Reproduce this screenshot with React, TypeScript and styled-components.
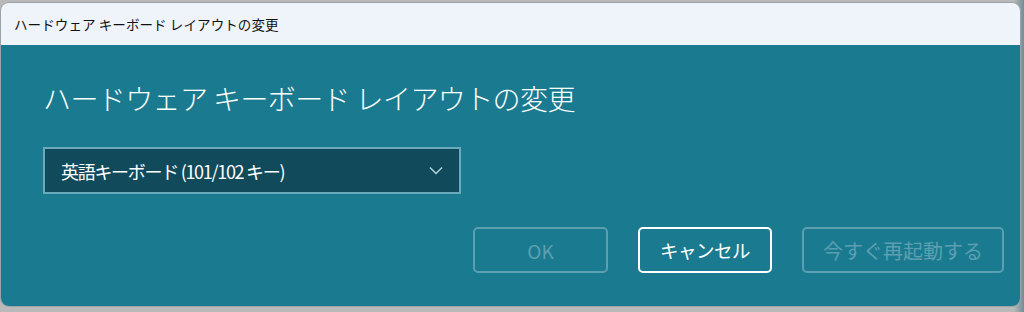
import React from "react";
import styled, { createGlobalStyle } from "styled-components";

const Global = createGlobalStyle`
  html, body { margin: 0; padding: 0; background: #b4b4b4; }
  body { width: 1024px; height: 312px; overflow: hidden; }
  #root { height: 312px; }
`;

const Desktop = styled.div`
  height: 312px;
  box-sizing: border-box;
  padding: 3px 4px 6px 1px;
  display: flex;
  background: linear-gradient(90deg, #b9b9b9 0%, #b9b9b9 99%, #6f8f96 100%);
`;

const Window = styled.div`
  flex: 1;
  display: flex;
  flex-direction: column;
  border-radius: 8px;
  overflow: hidden;
  box-shadow: 0 0 0 1px #9aa4a8;
  font-family: "Noto Sans CJK JP", "Noto Sans", sans-serif;
`;

const TitleBar = styled.div`
  height: 42px;
  background: #eef4f9;
  display: flex;
  align-items: center;
  padding-left: 13px;
  font-size: 13.5px;
  color: #111;
  letter-spacing: 0.1px;
`;

const Body = styled.div`
  flex: 1;
  background: #1a7b90;
  display: flex;
  flex-direction: column;
  padding: 33px 16px 0 42px;
`;

const Heading = styled.h1`
  margin: 0;
  font-size: 28px;
  font-weight: 300;
  color: #fff;
  letter-spacing: -0.6px;
  line-height: 40px;
`;

const Select = styled.div`
  margin-top: 29px;
  width: 418px;
  height: 47px;
  box-sizing: border-box;
  border: 2px solid #6aaabb;
  background: #114b5b;
  display: flex;
  align-items: center;
  justify-content: space-between;
  padding: 0 16px 0 16px;
  color: #fff;
  font-size: 18px;
  letter-spacing: -1.3px;
`;

const Buttons = styled.div`
  margin-top: 33px;
  display: flex;
  justify-content: flex-end;
  gap: 30px;
`;

const Button = styled.div<{ $disabled?: boolean; $w: number; $fs: number; $ls: number }>`
  width: ${(p) => p.$w}px;
  height: 46px;
  box-sizing: border-box;
  border-radius: 5px;
  border: 2px solid ${(p) => (p.$disabled ? "#5d9fb0" : "#ffffff")};
  color: ${(p) => (p.$disabled ? "#5d9fb0" : "#ffffff")};
  display: flex;
  align-items: center;
  justify-content: center;
  font-size: ${(p) => p.$fs}px;
  letter-spacing: ${(p) => p.$ls}px;
`;

export default function App() {
  return (
    <>
      <Global />
      <Desktop>
        <Window>
          <TitleBar>ハードウェア キーボード レイアウトの変更</TitleBar>
          <Body>
            <Heading>ハードウェア キーボード レイアウトの変更</Heading>
            <Select>
              <span>英語キーボード (101/102 キー)</span>
              <svg width="14" height="9" viewBox="0 0 14 9">
                <path d="M1 1.5 L7 7.5 L13 1.5" fill="none" stroke="#b9d6de" strokeWidth="1.4" />
              </svg>
            </Select>
            <Buttons>
              <Button $disabled $w={135} $fs={19} $ls={0}>OK</Button>
              <Button $w={134} $fs={18.5} $ls={-0.5}>キャンセル</Button>
              <Button $disabled $w={202} $fs={20} $ls={0}>今すぐ再起動する</Button>
            </Buttons>
          </Body>
        </Window>
      </Desktop>
    </>
  );
}
